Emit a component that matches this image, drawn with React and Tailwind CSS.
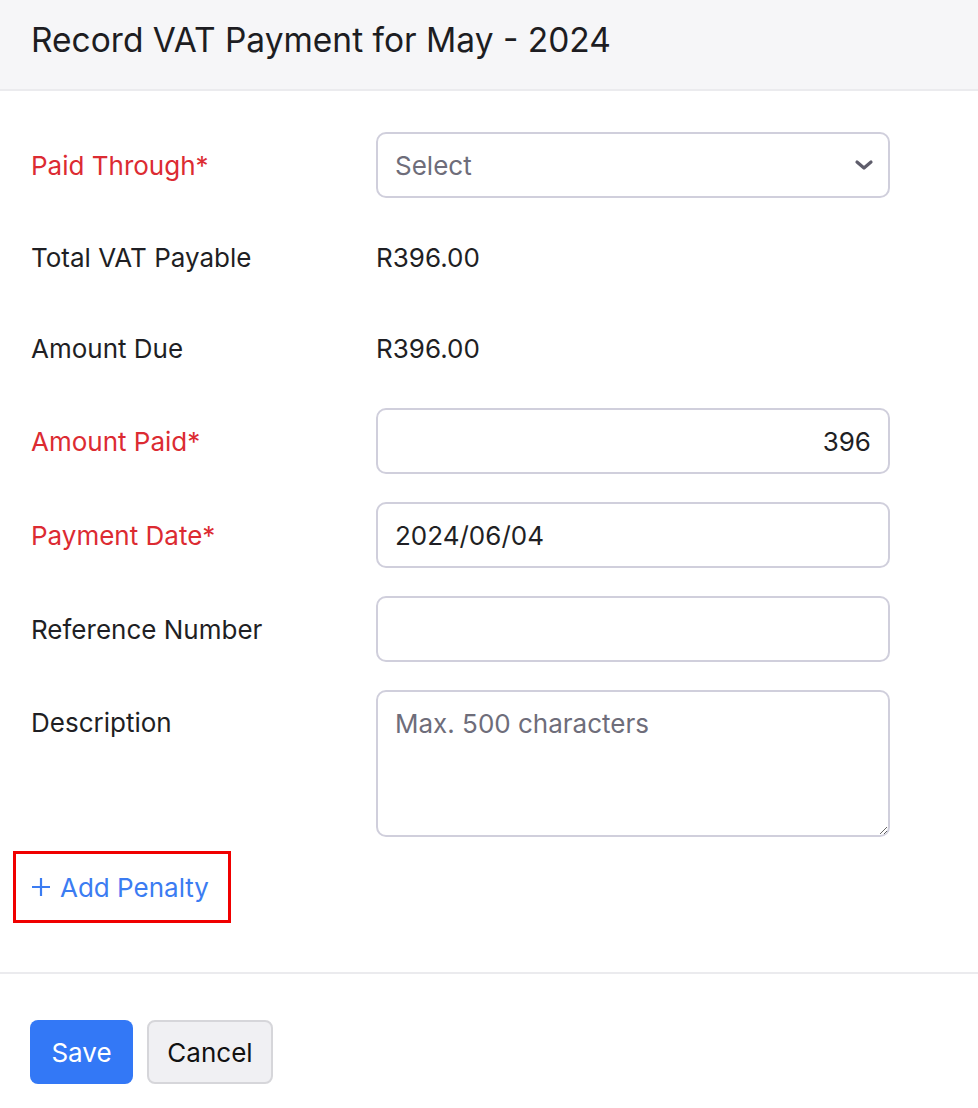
import React from 'react';

function Row({ label, required, children, top }) {
  return (
    <div className={`grid grid-cols-[345px_514px] ${top ? 'items-start' : 'items-center'}`}>
      <div className={`text-[26px] ${required ? 'text-[#dc2b32]' : 'text-[#1f1f24]'} ${top ? 'pt-[13px]' : ''}`}>
        {label}
        {required && '*'}
      </div>
      {children}
    </div>
  );
}

const inputCls =
  'h-[66px] w-full rounded-[10px] border-2 border-[#d0cfdc] bg-white px-[17px] text-[26px] text-[#1f1f24] outline-none placeholder:text-[#6e6d7a]';

export default function App() {
  return (
    <div className="min-h-[1108px] bg-white font-['Inter',sans-serif]">
      <div className="flex h-[91px] items-center border-b-2 border-[#ebebee] bg-[#f6f6f8] px-[31px] pb-[9px]">
        <h1 className="text-[33.5px] text-[#1d1d22]">Record VAT Payment for May - 2024</h1>
      </div>

      <div className="flex flex-col gap-[28px] px-[31px] pt-[41px]">
        <Row label="Paid Through" required>
          <div className="relative">
            <div className={`${inputCls} flex items-center text-[#6e6d7a]`}>Select</div>
            <svg className="absolute right-[15px] top-[23px] h-[20px] w-[22px]" viewBox="0 0 22 20" fill="none">
              <path d="M4 7l7 6 7-6" stroke="#5e5d6b" strokeWidth="3.2" strokeLinecap="round" strokeLinejoin="round" />
            </svg>
          </div>
        </Row>
        <Row label="Total VAT Payable">
          <div className="flex h-[63px] items-center text-[26px] text-[#1f1f24]">R396.00</div>
        </Row>
        <Row label="Amount Due">
          <div className="flex h-[63px] items-center text-[26px] text-[#1f1f24]">R396.00</div>
        </Row>
        <Row label="Amount Paid" required>
          <input className={`${inputCls} text-right`} defaultValue="396" />
        </Row>
        <Row label="Payment Date" required>
          <input className={inputCls} defaultValue="2024/06/04" />
        </Row>
        <Row label="Reference Number">
          <input className={inputCls} />
        </Row>
        <Row label="Description" top>
          <textarea
            className="h-[147px] w-full rounded-[10px] border-2 border-[#d0cfdc] bg-white px-[17px] py-[12px] text-[26px] text-[#1f1f24] outline-none placeholder:text-[#6e6d7a]"
            placeholder="Max. 500 characters"
          />
        </Row>
      </div>

      <div className="ml-[13px] mt-[14px] flex h-[72px] w-[218px] items-center border-[3px] border-[#f00000] pl-[15px] text-[26px] text-[#3b7cf2]">
        <svg className="mr-[9px] h-[20px] w-[20px]" viewBox="0 0 20 20" fill="none">
          <path d="M10 1v18M1 10h18" stroke="#3b7cf2" strokeWidth="2.2" />
        </svg>
        Add Penalty
      </div>

      <div className="mt-[49px] border-t-2 border-[#ebebee]" />

      <div className="flex gap-[14px] px-[30px] pt-[46px]">
        <button className="h-[64px] w-[103px] rounded-[8px] bg-[#3378f6] text-[26px] text-white">Save</button>
        <button className="h-[64px] w-[126px] rounded-[8px] border-2 border-[#d6d6da] bg-[#f0f0f3] text-[26px] text-[#111]">Cancel</button>
      </div>
    </div>
  );
}
